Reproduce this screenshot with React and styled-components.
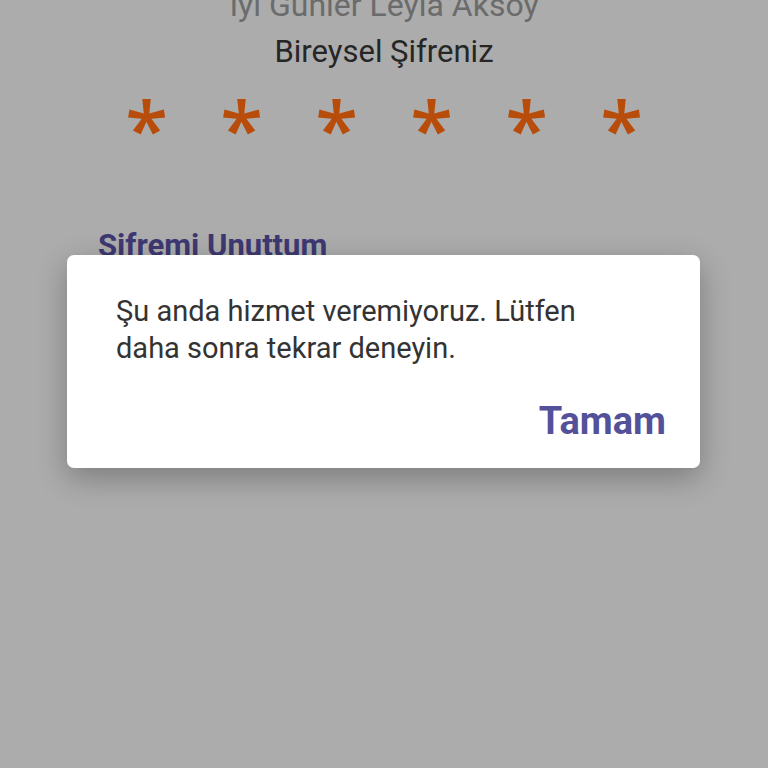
import React from "react";
import styled, { createGlobalStyle } from "styled-components";

const GlobalStyle = createGlobalStyle`
  html, body {
    margin: 0;
    padding: 0;
    background: #acacac;
  }
  body {
    font-family: Roboto, "Noto Sans", sans-serif;
  }
`;

const Screen = styled.div`
  position: relative;
  width: 768px;
  height: 768px;
  overflow: hidden;
  background: #acacac;
`;

const Content = styled.div`
  display: flex;
  flex-direction: column;
  align-items: center;
  margin-top: -15px;
`;

const Greeting = styled.div`
  font-size: 32px;
  line-height: 40px;
  color: #6b6b6b;
`;

const Title = styled.div`
  margin-top: 7px;
  font-size: 31px;
  line-height: 40px;
  color: #262626;
`;

const Dots = styled.div`
  display: flex;
  gap: 59px;
  margin-top: 12px;
`;

const Dot = styled.span`
  width: 36px;
  height: 50px;
  display: flex;
  justify-content: center;
  font-family: "Open Sans", sans-serif;
  font-size: 78px;
  font-weight: 600;
  line-height: 88px;
  color: #b84c0a;
`;

const Forgot = styled.div`
  align-self: flex-start;
  margin: 93px 0 0 98px;
  font-size: 31px;
  font-weight: 700;
  color: #3d3872;
`;

const Dialog = styled.div`
  position: absolute;
  left: 67px;
  top: 255px;
  width: 633px;
  height: 213px;
  box-sizing: border-box;
  padding: 38px 34px 0 49px;
  background: #ffffff;
  border-radius: 7px;
  box-shadow: 0 10px 30px rgba(0, 0, 0, 0.28);
  display: flex;
  flex-direction: column;
`;

const Message = styled.p`
  margin: 0;
  font-size: 29px;
  line-height: 37px;
  color: #333333;
`;

const Actions = styled.div`
  display: flex;
  justify-content: flex-end;
  margin-top: 32px;
`;

const ActionButton = styled.button`
  border: none;
  background: none;
  padding: 0;
  font-family: Roboto, "Noto Sans", sans-serif;
  font-size: 38px;
  font-weight: 700;
  color: #525199;
  cursor: pointer;
`;

export default function App() {
  return (
    <>
      <GlobalStyle />
      <Screen>
        <Content>
          <Greeting>İyi Günler Leyla Aksoy</Greeting>
          <Title>Bireysel Şifreniz</Title>
          <Dots>
            {[0, 1, 2, 3, 4, 5].map((i) => (
              <Dot key={i}>*</Dot>
            ))}
          </Dots>
          <Forgot>Şifremi Unuttum</Forgot>
        </Content>
        <Dialog>
          <Message>
            Şu anda hizmet veremiyoruz. Lütfen
            <br />
            daha sonra tekrar deneyin.
          </Message>
          <Actions>
            <ActionButton>Tamam</ActionButton>
          </Actions>
        </Dialog>
      </Screen>
    </>
  );
}
